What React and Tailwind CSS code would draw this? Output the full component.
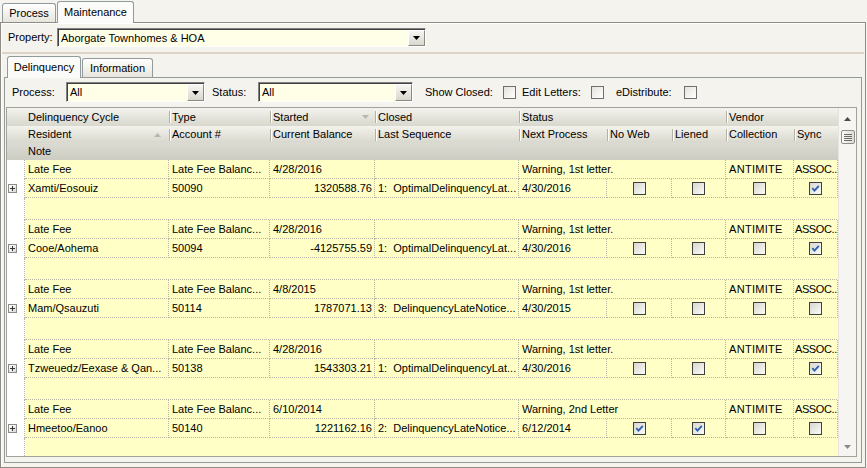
import React from "react";

const records = [
  { started: "4/28/2016", status: "Warning, 1st letter.", res: "Xamti/Eosouiz", acct: "50090", bal: "1320588.76", seq: "1:  OptimalDelinquencyLat...", next: "4/30/2016", cks: [0, 0, 0, 1] },
  { started: "4/28/2016", status: "Warning, 1st letter.", res: "Cooe/Aohema", acct: "50094", bal: "-4125755.59", seq: "1:  OptimalDelinquencyLat...", next: "4/30/2016", cks: [0, 0, 0, 1] },
  { started: "4/8/2015", status: "Warning, 1st letter.", res: "Mam/Qsauzuti", acct: "50114", bal: "1787071.13", seq: "3:  DelinquencyLateNotice...", next: "4/30/2015", cks: [0, 0, 0, 0] },
  { started: "4/28/2016", status: "Warning, 1st letter.", res: "Tzweuedz/Eexase & Qan...", acct: "50138", bal: "1543303.21", seq: "1:  OptimalDelinquencyLat...", next: "4/30/2016", cks: [0, 0, 0, 1] },
  { started: "6/10/2014", status: "Warning, 2nd Letter", res: "Hmeetoo/Eanoo", acct: "50140", bal: "1221162.16", seq: "2:  DelinquencyLateNotice...", next: "6/12/2014", cks: [1, 1, 0, 0] },
];

function DropBtn() {
  return (
    <div className="w-[17px] h-full shrink-0 flex items-center justify-center bg-linear-to-b from-[#f7f6f2] to-[#d9d7cd] border border-t-[#ffffff] border-l-[#ffffff] border-r-[#8a8a82] border-b-[#8a8a82]">
      <svg width="7" height="4" viewBox="0 0 7 4">
        <path d="M0 0 H7 L3.5 4 Z" fill="#000" />
      </svg>
    </div>
  );
}

function Combo({ w, h, text }) {
  return (
    <div className={`${w} ${h} shrink-0 flex border border-t-[#808080] border-l-[#808080] border-r-[#ffffff] border-b-[#ffffff] shadow-[inset_1px_1px_0_#404040] bg-[#ffffe8] pl-[2px] pt-[1px]`}>
      <div className="flex-1 flex items-center pl-[1px] text-black">{text}</div>
      <DropBtn />
    </div>
  );
}

function Check({ checked, light }) {
  return (
    <div className={`w-[13px] h-[13px] shrink-0 border ${light ? "border-[#6f6f6f] bg-linear-to-br from-[#e4e3dc] to-white" : "border-[#3f3f3f] bg-linear-to-br from-[#d8d7cf] to-[#fbfbf8]"} flex items-center justify-center`}>
      {checked ? (
        <svg width="9" height="9" viewBox="0 0 9 9">
          <path d="M1.3 4.2 L3.5 6.6 L7.8 1.8" stroke="#2f62b3" strokeWidth="1.9" fill="none" />
        </svg>
      ) : null}
    </div>
  );
}

function Plus() {
  return (
    <div className="w-[9px] h-[9px] border border-[#8c8c8c] bg-linear-to-br from-white to-[#dcdcd4] flex items-center justify-center">
      <svg width="7" height="7" viewBox="0 0 7 7">
        <path d="M1 3.5 H6 M3.5 1 V6" stroke="#333" strokeWidth="1" />
      </svg>
    </div>
  );
}

function HDiv() {
  return <span className="w-[2px] h-[12px] shrink-0 border-l border-[#b3b1a3] border-r border-r-white mr-[1px]" />;
}

function HCell({ w, children, first, arrow }) {
  return (
    <div className={`${w} shrink-0 flex items-center whitespace-nowrap overflow-hidden`}>
      {first ? <span className="w-[3px] shrink-0" /> : <HDiv />}
      <span className="flex-1">{children}</span>
      {arrow === "up" ? (
        <svg width="7" height="4" viewBox="0 0 7 4" className="mr-[8px]">
          <path d="M0 4 H7 L3.5 0 Z" fill="#b8b7ae" />
        </svg>
      ) : null}
      {arrow === "down" ? (
        <svg width="7" height="4" viewBox="0 0 7 4" className="mr-[6px]">
          <path d="M0 0 H7 L3.5 4 Z" fill="#b8b7ae" />
        </svg>
      ) : null}
    </div>
  );
}

const cellBase = "shrink-0 flex items-center whitespace-pre overflow-hidden bg-[#ffffc6] border-r border-b border-dotted border-[#b7b6a6]";

function Gutter({ children }) {
  return <div className="w-[18px] shrink-0 bg-white border-r border-dotted border-[#b7b6a6] flex items-center pl-[1px]">{children}</div>;
}

function Record({ r }) {
  return (
    <div className="flex flex-col shrink-0">
      <div className="flex h-[19px] shrink-0">
        <Gutter />
        <div className={`${cellBase} w-[144px] pl-[3px]`}>Late Fee</div>
        <div className={`${cellBase} w-[101px] pl-[3px]`}>Late Fee Balanc...</div>
        <div className={`${cellBase} w-[105px] pl-[3px]`}>{r.started}</div>
        <div className={`${cellBase} w-[144px] pl-[3px]`}></div>
        <div className={`${cellBase} w-[207px] pl-[3px]`}>{r.status}</div>
        <div className={`${cellBase} w-[68px] pl-[3px] tracking-[0.3px]`}>ANTIMITE</div>
        <div className={`${cellBase} w-[44px] pl-[1px] tracking-[-0.4px]`}>ASSOC...</div>
      </div>
      <div className="flex h-[19px] shrink-0">
        <Gutter>
          <Plus />
        </Gutter>
        <div className={`${cellBase} w-[144px] pl-[3px]`}>{r.res}</div>
        <div className={`${cellBase} w-[101px] pl-[3px]`}>{r.acct}</div>
        <div className={`${cellBase} w-[105px] justify-end pr-[2px]`}>{r.bal}</div>
        <div className={`${cellBase} w-[144px] pl-[3px]`}>{r.seq}</div>
        <div className={`${cellBase} w-[88px] pl-[3px]`}>{r.next}</div>
        <div className={`${cellBase} w-[65px] justify-center`}>
          <Check checked={r.cks[0]} />
        </div>
        <div className={`${cellBase} w-[54px] justify-center`}>
          <Check checked={r.cks[1]} />
        </div>
        <div className={`${cellBase} w-[68px] justify-center`}>
          <Check checked={r.cks[2]} />
        </div>
        <div className={`${cellBase} w-[44px] justify-center`}>
          <Check checked={r.cks[3]} />
        </div>
      </div>
      <div className="flex h-[22px] shrink-0">
        <Gutter />
        <div className={`${cellBase} w-[814px]`}></div>
      </div>
    </div>
  );
}

function ScrollBar() {
  return (
    <div className="w-[18px] shrink-0 bg-[#f6f5f1] border-l border-[#e6e4dc] flex flex-col items-center">
      <div className="h-[20px] w-full flex items-center justify-center pt-[1px] shrink-0">
        <svg width="7" height="4" viewBox="0 0 7 4">
          <path d="M0 4 H7 L3.5 0 Z" fill="#4a4a4a" />
        </svg>
      </div>
      <div className="mt-[2px] w-[14px] h-[14px] shrink-0 rounded-[2px] border border-[#8f8f8a] bg-linear-to-r from-[#fafaf8] to-[#dcdbd3] flex flex-col items-center justify-center gap-[1px]">
        <span className="w-[8px] h-px bg-[#6b6b6b]" />
        <span className="w-[8px] h-px bg-[#6b6b6b]" />
        <span className="w-[8px] h-px bg-[#6b6b6b]" />
        <span className="w-[8px] h-px bg-[#6b6b6b]" />
      </div>
      <div className="flex-1" />
      <div className="h-[18px] w-full flex items-center justify-center shrink-0">
        <svg width="7" height="4" viewBox="0 0 7 4">
          <path d="M0 0 H7 L3.5 4 Z" fill="#8a8a8a" />
        </svg>
      </div>
    </div>
  );
}

function Grid() {
  const hrow = "flex shrink-0 bg-linear-to-b from-[#f3f2ec] to-[#d9d8ce]";
  return (
    <div className="w-[851px] h-[350px] shrink-0 ml-[1px] mt-[5px] border border-[#a3a29a] bg-white flex overflow-hidden">
      <div className="flex-1 flex flex-col overflow-hidden">
        <div className={`${hrow} h-[18px]`}>
          <div className="w-[18px] shrink-0" />
          <HCell w="w-[144px]" first>Delinquency Cycle</HCell>
          <HCell w="w-[101px]">Type</HCell>
          <HCell w="w-[105px]" arrow="down">Started</HCell>
          <HCell w="w-[144px]">Closed</HCell>
          <HCell w="w-[207px]">Status</HCell>
          <HCell w="w-[68px]">Vendor</HCell>
          <div className="w-[44px] shrink-0" />
        </div>
        <div className={`${hrow} h-[17px]`}>
          <div className="w-[18px] shrink-0" />
          <HCell w="w-[144px]" first arrow="up">Resident</HCell>
          <HCell w="w-[101px]">Account #</HCell>
          <HCell w="w-[105px]">Current Balance</HCell>
          <HCell w="w-[144px]">Last Sequence</HCell>
          <HCell w="w-[88px]">Next Process</HCell>
          <HCell w="w-[65px]">No Web</HCell>
          <HCell w="w-[54px]">Liened</HCell>
          <HCell w="w-[68px]">Collection</HCell>
          <HCell w="w-[44px]">Sync</HCell>
        </div>
        <div className="flex shrink-0 h-[17px] bg-linear-to-b from-[#dcdbd3] to-[#cdccc2]">
          <div className="w-[18px] shrink-0" />
          <HCell w="w-[144px]" first>Note</HCell>
        </div>
        {records.map((r, i) => (
          <Record key={i} r={r} />
        ))}
      </div>
      <ScrollBar />
    </div>
  );
}

function Tab({ label, selected, w }) {
  return selected ? (
    <div className={`${w} h-[22px] shrink-0 relative z-10 mb-[-1px] rounded-t-[3px] border border-b-0 border-[#919b9c] bg-[#fbfbf9] flex items-center justify-center pb-[1px]`}>
      {label}
    </div>
  ) : (
    <div className={`${w} h-[19px] shrink-0 rounded-t-[3px] border border-b-0 border-[#919b9c] bg-linear-to-b from-white to-[#e7e5dc] flex items-center justify-center`}>
      {label}
    </div>
  );
}

export default function App() {
  return (
    <div className="w-[867px] h-[468px] bg-[#f4f3ee] overflow-hidden text-[11px] text-black font-['Liberation_Sans',Arial,sans-serif] leading-none">
      <div className="h-[22px] flex items-end pl-[2px] gap-[1px]">
        <Tab label="Process" w="w-[54px]" />
        <Tab label="Maintenance" w="w-[77px]" selected />
      </div>
      <div className="w-[866px] h-[446px] border border-[#8e8c84] shadow-[inset_1px_1px_0_#ffffff] bg-[#f4f3ee] flex flex-col">
        <div className="flex items-center h-[19px] mt-[5px] shrink-0">
          <div className="w-[56px] pl-[7px] shrink-0">Property:</div>
          <Combo w="w-[369px]" h="h-[19px]" text="Aborgate Townhomes & HOA" />
        </div>
        <div className="h-[2px] mt-[5px] mx-[1px] bg-[#dcd4c8] shrink-0" />
        <div className="h-[23px] flex items-end pl-[6px] gap-[1px] shrink-0">
          <Tab label="Delinquency" w="w-[74px]" selected />
          <Tab label="Information" w="w-[71px]" />
        </div>
        <div className="ml-[3px] w-[858px] h-[386px] shrink-0 border border-[#919b9c] bg-[#f4f3ee] flex flex-col">
          <div className="flex items-center h-[20px] mt-[4px] shrink-0">
            <div className="w-[61px] pl-[7px] shrink-0">Process:</div>
            <Combo w="w-[139px]" h="h-[20px]" text="All" />
            <div className="w-[46px] ml-[7px] shrink-0">Status:</div>
            <Combo w="w-[155px]" h="h-[20px]" text="All" />
            <div className="w-[78px] ml-[12px] shrink-0">Show Closed:</div>
            <Check light />
            <div className="w-[69px] ml-[6px] shrink-0">Edit Letters:</div>
            <Check light />
            <div className="w-[68px] ml-[12px] shrink-0">eDistribute:</div>
            <Check light />
          </div>
          <Grid />
        </div>
      </div>
    </div>
  );
}
